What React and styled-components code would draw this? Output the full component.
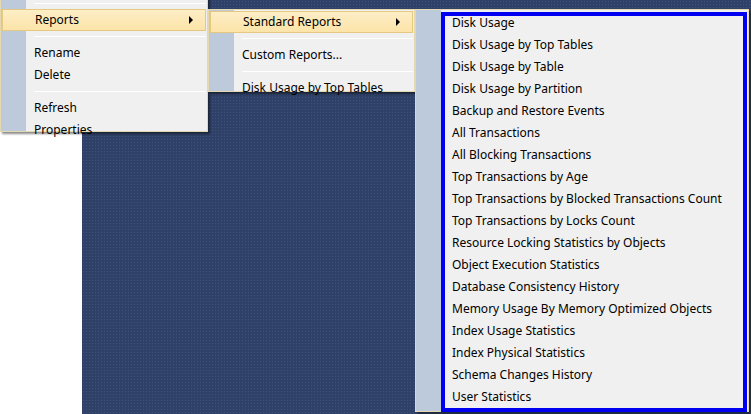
import React from "react";
import styled, { createGlobalStyle } from "styled-components";

const Global = createGlobalStyle`
  html, body { margin: 0; padding: 0; }
  body { font-family: "Noto Sans", "Open Sans", sans-serif; font-size: 12px; color: #000; }
`;

const Page = styled.div`
  position: relative;
  width: 751px;
  height: 414px;
  overflow: hidden;
  display: flex;
`;

const WhiteStrip = styled.div`
  width: 82px;
  background: #fff;
`;

const Canvas = styled.div`
  flex: 1;
  background-color: #2f4167;
  background-image: radial-gradient(#3c5180 0.7px, transparent 0.8px);
  background-size: 3px 3px;
`;

const Menu = styled.div`
  position: absolute;
  left: ${(p) => p.$x}px;
  top: ${(p) => p.$y}px;
  width: ${(p) => p.$w}px;
  height: ${(p) => p.$h}px;
  box-sizing: border-box;
  background: linear-gradient(to right, #bccadb 0 25px, #f0f0f0 25px);
  border: 1px solid #e4d8b0;
  box-shadow: 2px 2px 2px rgba(0, 0, 0, 0.45);
  padding: 1px;
  display: flex;
  flex-direction: column;
`;

const Item = styled.div`
  height: 22px;
  line-height: 22px;
  padding-left: 32px;
  position: relative;
  white-space: nowrap;
  box-sizing: border-box;
  ${(p) =>
    p.$hot &&
    `background: linear-gradient(#fdeec6, #fce4a8); border: 1px solid #e6c980; line-height: 20px;`}
`;

const Arrow = styled.span`
  position: absolute;
  right: 12px;
  top: 6px;
  border-left: 4px solid #000;
  border-top: 4px solid transparent;
  border-bottom: 4px solid transparent;
`;

const Sep = styled.div`
  height: 1px;
  margin: 5px 0 5px 32px;
  background: #c5c5c5;
  border-bottom: 1px solid #fff;
`;

const Highlight = styled.div`
  margin: 1px 0 0 24px;
  flex: 1;
  border: 4px solid #0000f0;
  display: flex;
  flex-direction: column;
`;

const ListItem = styled.div`
  height: 22px;
  line-height: 22px;
  padding-left: 7px;
  white-space: nowrap;
  margin-top: ${(p) => (p.$first ? "-4px" : "0")};
`;

const reports = [
  "Disk Usage",
  "Disk Usage by Top Tables",
  "Disk Usage by Table",
  "Disk Usage by Partition",
  "Backup and Restore Events",
  "All Transactions",
  "All Blocking Transactions",
  "Top Transactions by Age",
  "Top Transactions by Blocked Transactions Count",
  "Top Transactions by Locks Count",
  "Resource Locking Statistics by Objects",
  "Object Execution Statistics",
  "Database Consistency History",
  "Memory Usage By Memory Optimized Objects",
  "Index Usage Statistics",
  "Index Physical Statistics",
  "Schema Changes History",
  "User Statistics",
];

export default function App() {
  return (
    <Page>
      <Global />
      <WhiteStrip />
      <Canvas />
      <Menu $x={0} $y={-4} $w={208} $h={136}>
        <Sep />
        <Item $hot>
          Reports
          <Arrow />
        </Item>
        <Sep />
        <Item>Rename</Item>
        <Item>Delete</Item>
        <Sep />
        <Item>Refresh</Item>
        <Item>Properties</Item>
      </Menu>
      <Menu $x={208} $y={9} $w={207} $h={83}>
        <Item $hot>
          Standard Reports
          <Arrow />
        </Item>
        <Sep />
        <Item>Custom Reports...</Item>
        <Sep />
        <Item>Disk Usage by Top Tables</Item>
      </Menu>
      <Menu $x={415} $y={9} $w={334} $h={403}>
        <Highlight>
          {reports.map((r, i) => (
            <ListItem key={r} $first={i === 0}>
              {r}
            </ListItem>
          ))}
        </Highlight>
      </Menu>
    </Page>
  );
}
